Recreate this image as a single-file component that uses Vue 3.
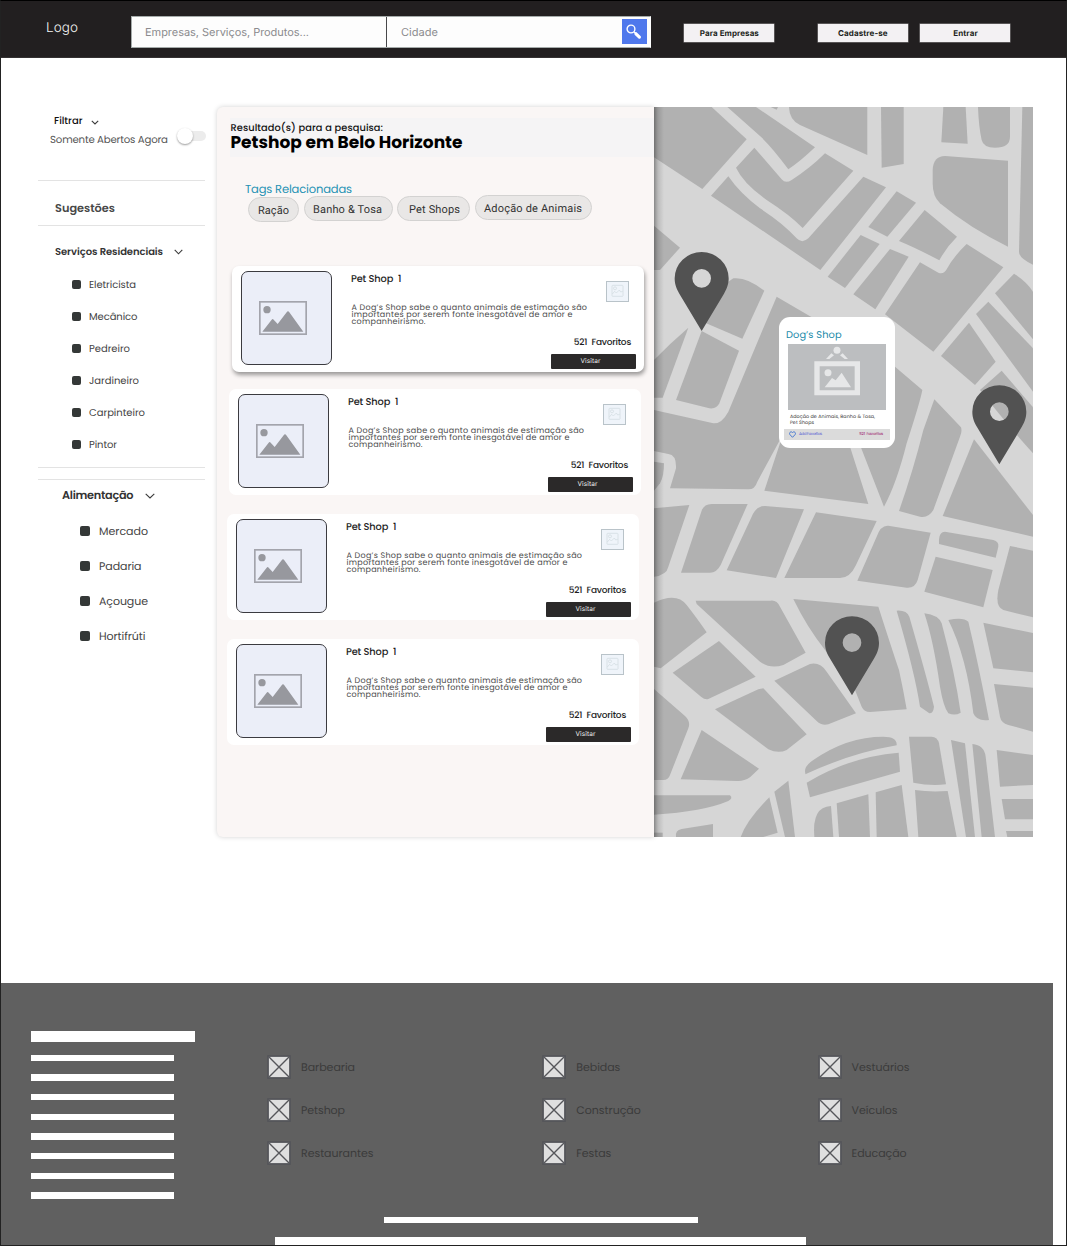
<script setup>
// Adjusts tracking so that a label takes exactly the given width.
const vFit = {
  mounted(el, { value }) {
    const natural = el.getBoundingClientRect().width
    const gaps = el.textContent.length - 1
    el.style.letterSpacing = ((value - natural) / gaps).toFixed(3) + 'px'
  },
}

const services = [
  ['Eletricista', 47], ['Mecânico', 48.5], ['Pedreiro', 41],
  ['Jardineiro', 50], ['Carpinteiro', 56], ['Pintor', 28],
]
const foods = [['Mercado', 49], ['Padaria', 42.5], ['Açougue', 49], ['Hortifrúti', 46.5]]
const tags = [
  { text: 'Ração', w: 31, cls: 't1' },
  { text: 'Banho & Tosa', w: 69, cls: 't2' },
  { text: 'Pet Shops', w: 51, cls: 't3' },
  { text: 'Adoção de Animais', w: 98, cls: 't4' },
]
const shops = ['c1', 'c2', 'c3', 'c4']
const footerCols = [
  [['Barbearia', 54], ['Petshop', 44], ['Restaurantes', 72.5]],
  [['Bebidas', 44], ['Construção', 64.5], ['Festas', 35]],
  [['Vestuários', 58], ['Veículos', 46], ['Educação', 55]],
]

const blocksTop = [
  'M12 21H185L290 118 157 267 12 172Z',
  'M232 21H318L495 142Q450 185 415 208 365 140 330 108Z',
  'M362 21H384L380 29Z',
  'M417 21H652V165L450 75Q418 60 417 21Z',
  'M693 21H761V192L695 203Z',
  'M880 21H947L953 131 874 127Z',
  'M984 21H1080V110Q1080 143 1035 143 1000 143 995 120 986 80 984 21Z',
  'M1117 21H1149V494Q1107 475 1107 455Z',
  'M885 168L1074 182V440Q960 385 870 310 848 290 848 250V210Q850 168 885 168Z',
  'M313 143L395 238Q407 252 425 240 480 205 525 160L610 212 458 384Q420 345 350 300 280 250 258 203Z',
  'M235 229Q270 280 330 325 400 370 440 415 456 432 475 415L640 230 708 262 511 510 183 287Z',
  'M740 274L798 308 712 410 655 381Z',
  'M824 330L921 410Q890 440 868 481 800 445 747 423Z',
  'M632 405L689 432 585 564 533 530Z',
  'M720 447L776 470 676 628 610 583Z',
  'M950 432L1060 502 850 755 705 643 810 487 865 518Q880 525 890 508 910 470 950 432Z',
  'M12 377L90 443 30 510H12Z',
  'M250 535Q290 530 343 572L277 716 165 668 235 545Z',
  'M380 590L560 695V920L395 1010 322 1145Q315 1168 295 1168L60 1165 78 1105Q80 1065 55 1062L12 1053V930L190 970Q215 972 235 935L325 720Z',
  'M155 693L267 752 208 910Q200 928 178 925L78 900Z',
  'M115 683L38 893H12V780Q60 730 115 683Z',
  'M12 1085L42 1090Q42 1130 30 1150L12 1172Z',
  'M400 1000L343 1172 655 1212 600 1040V1000Z',
  'M700 1000L632 1040 702 1220Q740 1150 770 1030 812 900 817 870L735 800 700 780Z',
  'M853 898L933 982Q937 995 930 1010L850 1230Q835 1255 810 1250L747 1233Q790 1110 820 990Z',
  'M972 1018L1149 1245V1310L878 1248Z',
  'M957 668L1037 785 975 855 873 768Z',
  'M1015 605L1149 745V875L978 642Z',
  'M1092 521Q1130 545 1149 575V718L1035 580Z',
  'M1055 812L1149 922V1060Q1060 960 990 870Z',
  'M12 1225L118 1215 55 1400Q50 1425 12 1430Z',
  'M185 1212H293L212 1395Q200 1418 180 1418H93L155 1232Q162 1212 185 1212Z',
  'M345 1218L462 1228 378 1434 230 1411 305 1250Q318 1218 345 1218Z',
  'M498 1237L680 1263 618 1395Q600 1434 570 1434H403Z',
  'M715 1277L842 1298 803 1440Q795 1465 770 1463L622 1442 680 1310Q692 1275 715 1277Z',
  'M885 1295L1030 1320Q1047 1325 1045 1340L1037 1373 867 1332Q865 1295 885 1295Z',
  'M857 1370L1028 1410 1000 1522 823 1475Z',
  'M1080 1338L1149 1352V1552L1060 1530Q1035 1520 1045 1470Z',
]
const blocksBottom = [
  'M12 38Q80 5 110 45 145 90 170 127L32 235 12 230Z',
  'M137 32H360Q380 28 390 50L467 188 400 225Q360 238 330 215 290 180 140 42Z',
  'M430 27L685 50Q730 190 747 240 760 300 770 358L660 366Q642 366 635 350L615 300 525 180Q470 110 430 27Z',
  'M207 153L317 260 175 327Q165 330 153 320L68 248Z',
  'M373 272L480 222Q510 215 530 245L618 370 535 403Q515 408 500 393Z',
  'M340 295L470 433 410 480Q385 492 355 478L195 358 325 298Z',
  'M12 297L105 378Q123 395 115 415L60 555Q55 570 40 570H12Z',
  'M155 420L327 536 300 562Q280 575 260 573L92 568Z',
  'M12 616H240Q250 625 235 633 160 665 12 674Z',
  'M12 728H38V741H12Z',
  'M78 741Q75 720 95 717L189 702V741Z',
  'M358 622L383 728 340 741H272Q290 690 358 622Z',
  'M415 572L435 741H405L373 605Z',
  'M466 550Q460 530 490 510 590 440 700 440 742 440 740 466 600 490 466 553Z',
  'M470 578Q600 500 746 488L750 545 480 622Z',
  'M493 741Q485 650 543 648L550 741Z',
  'M560 640L655 613 660 741H567Z',
  'M677 607L755 585 775 741H680Z',
  'M777 440H845Q862 440 867 460L888 583Q840 588 790 578Z',
  'M795 600Q840 607 893 603L920 741H805Z',
  'M740 62Q770 60 778 80 830 260 852 350 850 370 838 370L810 350Q795 250 740 62Z',
  'M823 70Q865 75 875 100 915 250 932 368 915 378 895 370 880 350 870 290 850 150 823 70Z',
  'M895 90Q940 80 955 95 985 220 1017 390 980 395 970 370 950 200 895 90Z',
  'M1000 98L1149 129V247L1030 235Z',
  'M1032 282L1149 293V425L1075 405Q1053 398 1050 380Z',
  'M903 450L945 460 975 741H948Z',
  'M967 462Q1003 465 1007 500L1035 741H995Z',
  'M1040 480L1149 495V585L1050 590Z',
  'M1055 627H1149V688H1065Z',
  'M1068 723H1149V741H1072Z',
]
const pins = [[155, 535], [1048, 935], [606, 1628]]
</script>

<template>
  <div class="page">
    <header class="topbar">
      <span class="logo"><span v-fit="32">Logo</span></span>
      <div class="search">
        <div class="field first"><span v-fit="164">Empresas, Serviços, Produtos...</span></div>
        <div class="field"><span v-fit="37">Cidade</span></div>
        <div class="go">
          <svg width="25" height="25" viewBox="0 0 25 25">
            <circle cx="9" cy="10" r="3.9" fill="none" stroke="#fff" stroke-width="1.4" />
            <path d="M12 12.800L14 14.800" stroke="#fff" stroke-width="1.4" />
            <path d="M14 14.800L17.400 18.100" stroke="#fff" stroke-width="3.2" stroke-linecap="round" />
          </svg>
        </div>
      </div>
      <nav class="nav">
        <a class="btn business"><span v-fit="59">Para Empresas</span></a>
        <a class="btn signup"><span v-fit="49.5">Cadastre-se</span></a>
        <a class="btn login"><span v-fit="24.5">Entrar</span></a>
      </nav>
    </header>

    <main class="main">
      <aside class="sidebar">
        <div class="filter"><span v-fit="28.5">Filtrar</span>
          <svg width="8" height="5" viewBox="0 0 8 5"><path d="M.8 .8L4 4 7.2 .8" /></svg>
        </div>
        <div class="open-now"><span v-fit="118">Somente Abertos Agora</span><i class="toggle"><b></b></i></div>
        <hr class="r1">
        <h3 class="suggest"><span v-fit="60">Sugestões</span></h3>
        <hr>
        <h4 class="group g1"><span v-fit="108">Serviços Residenciais</span>
          <svg width="9" height="6" viewBox="0 0 9 6"><path d="M.7 .8L4.5 4.8 8.3 .8" /></svg>
        </h4>
        <ul class="list l1">
          <li v-for="[name, w] in services" :key="name"><i></i><span v-fit="w">{{ name }}</span></li>
        </ul>
        <hr class="r3">
        <hr class="r4">
        <h4 class="group g2"><span v-fit="71.5">Alimentação</span>
          <svg width="10" height="6" viewBox="0 0 10 6"><path d="M.7 .8L5 5 9.3 .8" /></svg>
        </h4>
        <ul class="list l2">
          <li v-for="[name, w] in foods" :key="name"><i></i><span v-fit="w">{{ name }}</span></li>
        </ul>
      </aside>

      <section class="results">
        <div class="heading">
          <p><span v-fit="152.5">Resultado(s) para a pesquisa:</span></p>
          <h1><span v-fit="232">Petshop em Belo Horizonte</span></h1>
        </div>
        <h2 class="related"><span v-fit="107">Tags Relacionadas</span></h2>
        <div class="tags">
          <span v-for="t in tags" :key="t.text" class="tag" :class="t.cls"><span v-fit="t.w">{{ t.text }}</span></span>
        </div>

        <article v-for="c in shops" :key="c" class="card" :class="c">
          <div class="thumb">
            <svg width="48" height="34" viewBox="0 0 144 102">
              <rect x="2.5" y="2.5" width="139" height="97" fill="none" stroke="#a3a4ac" stroke-width="5" />
              <circle cx="24" cy="26" r="11" fill="#97989e" />
              <path d="M10 92L38 56Q41 52 44 56L56 69 83 34Q87 28 91 34L133 92Z" fill="#97989e" />
            </svg>
          </div>
          <div class="info">
            <div class="head">
              <h3><span v-fit="50.5">{{ 'Pet Shop  1' }}</span></h3>
              <svg class="mini" width="23" height="21" viewBox="0 0 69 63">
                <rect x="1.5" y="1.5" width="66" height="60" fill="#eff4fa" stroke="#b9c3c9" stroke-width="3" />
                <g fill="none" stroke="#cfd9de" stroke-width="2">
                  <rect x="18" y="13" width="33" height="33" rx="2" />
                  <circle cx="27" cy="22" r="4.5" />
                  <path d="M19 39L26 31 31 36 40 27 44 33 50 31" />
                </g>
              </svg>
            </div>
            <p class="desc">
              <span v-fit="235.5">A Dog’s Shop sabe o quanto animais de estimação são</span>
              <span v-fit="221">importantes por serem fonte inesgotável de amor e</span>
              <span v-fit="74">companheirismo.</span>
            </p>
            <div class="fav"><span v-fit="57.5">{{ '521  Favoritos' }}</span></div>
            <a class="visit"><span v-fit="20">Visitar</span></a>
          </div>
        </article>
      </section>

      <section class="map">
        <svg class="streets" width="379" height="730" viewBox="12 21 1137 2190" preserveAspectRatio="none">
          <rect x="12" y="21" width="1137" height="2190" fill="#d6d6d6" />
          <g fill="#b1b1b1">
            <path v-for="d in blocksTop" :key="d" :d="d" />
            <g transform="translate(0 1470)"><path v-for="d in blocksBottom" :key="d" :d="d" /></g>
          </g>
          <g fill="#525252" fill-rule="evenodd">
            <path
              v-for="[x, y] in pins" :key="x" :transform="`translate(${x} ${y})`"
              d="M0 158L-67 46C-78 27-81 14-81 0A81 79 0 0 1 81 0C81 14 78 27 67 46ZM28 0A28 28 0 1 0-28 0 28 28 0 1 0 28 0Z"
            />
          </g>
        </svg>
        <div class="popup">
          <h5><span v-fit="55.5">Dog’s Shop</span></h5>
          <svg width="98" height="66" viewBox="0 0 294 198">
            <rect width="294" height="198" fill="#bcbec0" />
            <g fill="#e6e7e8">
              <circle cx="147" cy="19" r="10.5" />
              <path d="M130 28L138 34 124 45H114ZM164 28L156 34 170 45H180Z" />
              <path fill-rule="evenodd" d="M79 52H216V154H79ZM95 67V139H200V67Z" />
              <circle cx="120" cy="86" r="10.5" />
              <path d="M110 130L132 102 143 109 161 86 189 130Z" />
            </g>
          </svg>
          <p><span v-fit="85">Adoção de Animais, Banho &amp; Tosa,</span><span v-fit="24">Pet Shops</span></p>
          <div class="actions">
            <svg width="7" height="7" viewBox="0 0 14 14"><path d="M7 12.600L2 7.400C-.8 4.200 3.400-.6 7 3 10.600-.6 14.800 4.200 12 7.400Z" fill="none" stroke="#3a6fd0" stroke-width="1.8" /></svg>
            <span v-fit="23" class="add">Add Favoritos</span>
            <span v-fit="24" class="count">{{ '521  Favoritos' }}</span>
          </div>
        </div>
      </section>
    </main>

    <footer class="footer">
      <div class="upper">
        <div class="bars"><i v-for="n in 9" :key="n"></i></div>
        <div class="cols">
          <ul v-for="(col, i) in footerCols" :key="i">
            <li v-for="[name, w] in col" :key="name">
              <svg width="24" height="24" viewBox="0 0 24 24">
                <rect x="1" y="1" width="22" height="22" fill="#dfdfdf" stroke="#55565a" stroke-width="1.8" />
                <path d="M2 2L22 22M22 2L2 22" stroke="#55565a" stroke-width="1.4" />
              </svg>
              <span v-fit="w">{{ name }}</span>
            </li>
          </ul>
        </div>
      </div>
      <div class="line short"></div>
      <div class="line long"></div>
    </footer>
    <div class="outline"></div>
  </div>
</template>

<style>
body { margin: 0; background: #fff; }
</style>

<style scoped>
.page {
  position: relative; width: 1067px; height: 1246px; overflow: hidden; background: #fff;
  font-family: Poppins, Inter, "Noto Sans", sans-serif; color: #444; text-rendering: geometricPrecision;
}
.page * { box-sizing: border-box; }
h1, h2, h3, h4, h5, p, ul { margin: 0; padding: 0; }
ul { list-style: none; }
span { display: inline-block; white-space: pre; }
.outline { position: absolute; inset: 0; border: 1px solid #222; border-top-color: #000; pointer-events: none; }

.topbar { display: flex; align-items: flex-start; height: 58px; background: #221f20; border-bottom: 1px solid #343132; }
.logo { width: 85px; margin: 18px 0 0 46px; font: 300 13.500px/20px Inter, sans-serif; color: #f4f4f4; }
.search { display: flex; width: 520px; height: 32px; margin-top: 16px; background: #fdfdfd; border: 1px solid #a5abaa; border-right-color: #fff; }
.field { width: 235px; padding-left: 14px; font: 400 11px/30px Inter, sans-serif; color: #8b8b8e; }
.field.first { width: 255px; padding-left: 13px; border-right: 1px solid #48484a; }
.go { width: 25px; height: 25px; margin-top: 2.400px; background: #4f78ec; }
.go svg { display: block; }
.nav { display: flex; margin: 24px 0 0 33.400px; }
.btn { width: 90px; height: 18px; background: #f3f1f3; font: 700 8px/18px Inter, sans-serif; color: #221f20; text-align: center; box-shadow: 0 0 0 .5px #8b898a; }
.signup { margin-left: 43.500px; }
.login { margin-left: 12.600px; }

.main { display: flex; height: 925px; padding-top: 49px; }
.sidebar { width: 217px; padding-left: 38px; }
.sidebar span, .cols span { padding-top: 1.200px; }
.sidebar svg { fill: none; stroke: #3a3a3a; stroke-width: 1.1; }
.filter { display: flex; align-items: center; height: 18px; margin-top: 5px; padding-left: 16px; font-size: 10px; font-weight: 500; color: #111; }
.filter span { padding-top: 0; }
.filter svg { margin: 2px 0 0 9px; }
.open-now { display: flex; align-items: center; height: 18px; padding-left: 12px; font-size: 10.200px; color: #555; }
.toggle { display: flex; align-items: center; width: 20px; height: 10px; margin: -6px 0 0 18px; border-radius: 5px; background: #ececec; }
.toggle b { flex: none; width: 16px; height: 16px; margin-left: -9px; border-radius: 50%; background: #fff; box-shadow: 0 1px 2px rgba(0, 0, 0, .4); }
hr { width: 167px; height: 1px; margin: 0; border: 0; background: #e3e3e3; }
.r1 { margin-top: 32px; }
.suggest { display: flex; align-items: center; height: 44px; padding: 10px 0 0 17px; font-size: 11.300px; font-weight: 600; color: #484848; }
.group { display: flex; align-items: center; font-weight: 600; color: #333; }
.g1 { height: 33px; margin-top: 9px; padding-left: 17px; font-size: 10px; }
.g1 svg { margin-left: 11px; }
.g2 { height: 31px; padding-left: 24px; font-size: 11.300px; }
.g2 span { padding-top: 0; }
.g2 svg { margin-left: 12px; }
.list li { display: flex; align-items: center; }
.list i { background: #343837; border-radius: 2px; }
.l1 li { height: 32px; padding-left: 34px; font-size: 10px; }
.l1 i { width: 9px; height: 9px; margin-right: 8px; }
.l2 { margin-top: 3px; }
.l2 li { height: 34.800px; padding-left: 42px; font-size: 11px; }
.l2 i { width: 10px; height: 10px; margin-right: 9px; }
.r3 { margin-top: 7px; }
.r4 { margin-top: 11px; }

.results { position: relative; z-index: 1; width: 437px; height: 730px; padding-top: 11px; background: #faf6f5; border-radius: 6px 0 0 6px; box-shadow: 0 0 5px rgba(0, 0, 0, .18); }
.heading { height: 39px; margin-left: 13px; background: #f5f4f5; }
.heading p { height: 14px; padding: 3px 0 0 .5px; font-size: 9.800px; line-height: 16px; font-weight: 500; color: #111; }
.heading h1 { padding-left: .5px; font-size: 17px; line-height: 21px; font-weight: 700; color: #000; }
.related { height: 17px; margin: 24px 0 0 28px; font-size: 11.500px; line-height: 19px; font-weight: 400; color: #2391b3; }
.tags { display: flex; align-items: flex-start; height: 28px; padding-left: 31px; margin-top: -3px; }
.tag { height: 25px; border: 1px solid #d3d2d1; border-radius: 13px; background: #e9e7e6; font: 400 11px/25px Roboto, sans-serif; color: #333; }
.t1 { width: 51px; margin-top: 2px; padding-left: 9px; }
.t2 { width: 89px; margin: 1px 0 0 5px; padding-left: 8px; }
.t3 { width: 73px; margin: 1px 0 0 4px; padding-left: 11px; }
.t4 { width: 117px; margin-left: 5px; padding-left: 8px; }
.card { display: flex; width: 412px; height: 106px; padding: 5px 8px 0 9px; border-radius: 7px; background: #fff; }
.c1 { margin: 43px 0 0 15px; box-shadow: 1px 3px 4px rgba(0, 0, 0, .38); }
.c2 { margin: 17px 0 0 12px; }
.c3 { margin: 19px 0 0 10px; }
.c4 { margin: 19px 0 0 10px; }
.thumb { width: 91px; height: 94px; padding: 29px 0 0 17px; border: 1px solid #3b3b40; border-radius: 7px; background: #ebeef8; }
.thumb svg { display: block; }
.info { display: flex; flex-direction: column; align-items: flex-end; width: 285px; margin-left: 19px; }
.head { display: flex; justify-content: space-between; width: 285px; height: 34px; }
.head h3 { font-size: 9.800px; line-height: 18px; font-weight: 500; color: #1e1e1e; }
.mini { margin: 10px 7.500px 0 0; }
.desc { width: 284.500px; height: 30px; padding-top: .4px; font-size: 8px; line-height: 6.600px; color: #4b4b4b; }
.desc span { display: table; }
.fav { height: 15px; padding-right: 5px; font-size: 9px; line-height: 17.500px; font-weight: 500; color: #1e1e1e; }
.visit { width: 85px; height: 15px; margin-top: 4px; padding-left: 29.500px; border-radius: 1px; background: #2b2929; font: 400 6.500px/15px Inter, sans-serif; color: #eee; }

.map { position: relative; width: 379px; height: 730px; }
.map::before { content: ""; position: absolute; inset: 0 auto 0 0; width: 10px; background: linear-gradient(90deg, rgba(0, 0, 0, .3), rgba(0, 0, 0, .12) 40%, transparent); }
.streets { display: block; }
.popup { position: absolute; left: 125px; top: 210px; width: 116px; height: 131px; padding: 8px 5px 0; border-radius: 11px; background: #fff; }
.popup h5 { height: 18px; margin-left: 2px; font-size: 9.800px; line-height: 21.500px; font-weight: 400; color: #1788a8; }
.popup > svg { display: block; margin: 1px 0 0 4px; }
.popup p { height: 19px; margin-left: 6px; padding-top: 4.300px; font-size: 4.800px; line-height: 5.500px; color: #333; }
.popup p span { display: table; }
.actions { display: flex; align-items: center; height: 11px; padding: 0 7px 0 5px; background: #dbdbdb; font-size: 4px; line-height: 6px; }
.add { margin: 0 auto 0 3px; color: #5661d4; }
.count { padding-top: 1.500px; color: #a8407f; font-weight: 500; }

.footer { width: 1053.400px; height: 263px; background: #606060; }
.upper { display: flex; height: 234px; }
.bars { flex: none; width: 268px; padding: 48px 0 0 31px; }
.bars i { display: block; width: 143px; height: 6.500px; margin-bottom: 13.200px; background: #fff; }
.bars i:first-child { width: 164.400px; height: 11px; margin-bottom: 12.500px; }
.cols { display: flex; flex: none; padding-top: 62px; }
.cols ul { width: 275.300px; }
.cols li { display: flex; align-items: center; height: 43px; font-size: 11px; color: #3b3b3b; }
.cols svg { margin-right: 10px; margin-left: -1px; }
.line { background: #fff; }
.short { width: 314px; height: 6px; margin-left: 384px; }
.long { width: 531px; height: 10px; margin: 13.500px 0 0 275px; }
</style>
